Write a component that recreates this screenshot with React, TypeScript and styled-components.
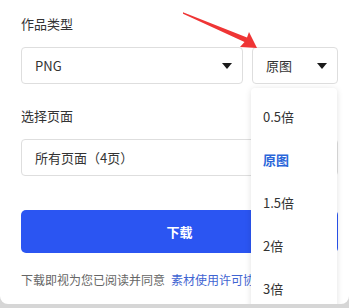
import React from 'react';
import styled, { createGlobalStyle } from 'styled-components';

const GlobalStyle = createGlobalStyle`
  html, body { margin: 0; padding: 0; background: #d6d6d6; }
  body { font-family: "Noto Sans CJK SC", "Noto Sans", sans-serif; }
`;

const Panel = styled.div`
  position: relative;
  width: 349px;
  height: 304px;
  box-sizing: border-box;
  background: #fff;
  border-radius: 0 0 8px 8px;
  padding: 14px 11px 0 21px;
  display: flex;
  flex-direction: column;
`;

const Label = styled.div<{ $top: number }>`
  margin-top: ${p => p.$top}px;
  font-size: 13px;
  line-height: 20px;
  color: #333;
`;

const Row = styled.div`
  display: flex;
  gap: 9px;
  margin-top: 13px;
`;

const Select = styled.div<{ $width?: number }>`
  box-sizing: border-box;
  height: 37px;
  ${p => (p.$width ? `width: ${p.$width}px;` : 'flex: 1;')}
  border: 1px solid #dedede;
  border-radius: 4px;
  display: flex;
  align-items: center;
  justify-content: space-between;
  padding: 0 10px 0 13px;
  font-size: 13px;
  color: #333;
`;

const Caret = styled.span`
  width: 0;
  height: 0;
  border-left: 5px solid transparent;
  border-right: 5px solid transparent;
  border-top: 6px solid #1a1a1a;
`;

const Button = styled.div`
  margin-top: 34px;
  height: 43px;
  border-radius: 5px;
  background: #2b55f2;
  color: #fff;
  font-size: 13px;
  font-weight: 700;
  display: flex;
  align-items: center;
  justify-content: center;
`;

const Footer = styled.div`
  margin-top: 17px;
  font-size: 12px;
  line-height: 20px;
  color: #666;
  white-space: nowrap;
`;

const Link = styled.span`
  color: #3f64d2;
  margin-left: 6px;
`;

const Menu = styled.div`
  position: absolute;
  left: 251px;
  top: 88px;
  width: 86px;
  height: 230px;
  box-sizing: border-box;
  padding-top: 7px;
  background: #fff;
  box-shadow: 0 1px 6px rgba(0, 0, 0, 0.12);
  border-radius: 4px;
`;

const Item = styled.div<{ $active?: boolean }>`
  height: 43px;
  display: flex;
  align-items: center;
  padding-left: 12px;
  font-size: 13px;
  color: ${p => (p.$active ? '#2a66d9' : '#333')};
  font-weight: ${p => (p.$active ? 700 : 400)};
`;

const Arrow = styled.svg`
  position: absolute;
  left: 0;
  top: 0;
  pointer-events: none;
`;

const options = ['0.5倍', '原图', '1.5倍', '2倍', '3倍'];

export default function App() {
  return (
    <>
      <GlobalStyle />
      <Panel>
        <Label $top={0}>作品类型</Label>
        <Row>
          <Select>
            PNG
            <Caret />
          </Select>
          <Select $width={86}>
            原图
            <Caret />
          </Select>
        </Row>
        <Label $top={22}>选择页面</Label>
        <Row>
          <Select>所有页面（4页）</Select>
        </Row>
        <Button>下载</Button>
        <Footer>
          下载即视为您已阅读并同意<Link>素材使用许可协议</Link>
        </Footer>
        <Menu>
          {options.map(o => (
            <Item key={o} $active={o === '原图'}>
              {o}
            </Item>
          ))}
        </Menu>
        <Arrow width="349" height="60" viewBox="0 0 349 60">
          <polygon points="183,12.3 247,37.5 249,32 257,48 240,47 244.5,42 183,13.7" fill="#ef3535" />
        </Arrow>
      </Panel>
    </>
  );
}
